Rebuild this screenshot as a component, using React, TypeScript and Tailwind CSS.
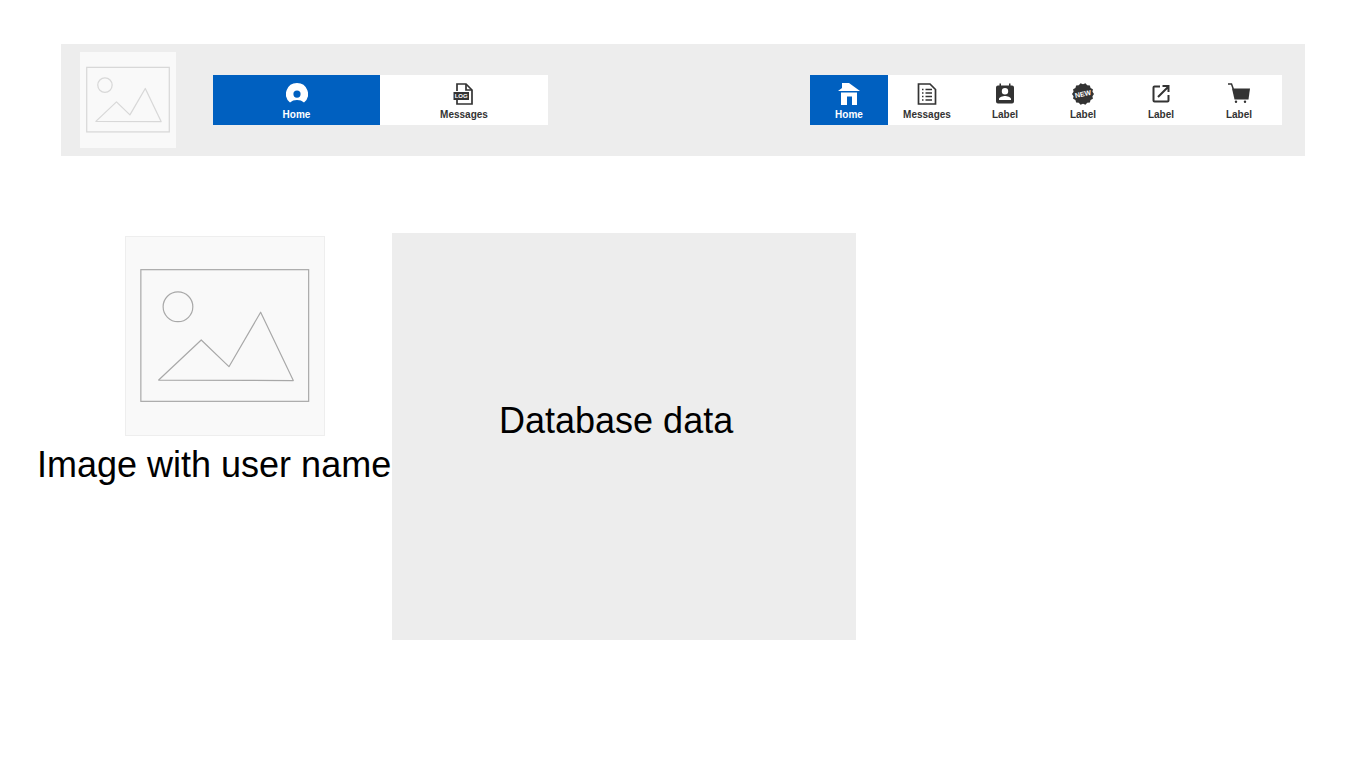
import React from 'react';

function Placeholder({ small }: { small?: boolean }) {
  const stroke = small ? '#d8d8d8' : '#a8a8a8';
  const width = small ? 2.600 : 1.200;
  return (
    <svg viewBox="0 0 200 200" className="w-full h-full" fill="none" stroke={stroke} strokeWidth={width}>
      <rect x={small ? 14 : 15} y={small ? 32 : 33} width={small ? 172 : 169.500} height={small ? 134.500 : 133} />
      <circle cx={small ? 52 : 52.500} cy={small ? 69 : 70.500} r={15} />
      <path d="M33 144.500 L76 104 L104 131 L136 76 L169 145 Z" strokeLinejoin="round" />
    </svg>
  );
}

function ProfileIcon() {
  return (
    <svg viewBox="0 0 22 22" className="w-[22px] h-[22px]">
      <path
        fill="#fff"
        fillRule="evenodd"
        d="M11 0a11 11 0 0 1 7 19.500C16 17.800 14 17 11 17s-5 .8-7 2.500A11 11 0 0 1 11 0Zm0 7.500a3.600 3.600 0 1 0 0 7.200 3.600 3.600 0 0 0 0-7.200Z"
      />
    </svg>
  );
}

function LogFileIcon() {
  return (
    <svg viewBox="0 0 22 22" className="w-[22px] h-[22px]">
      <path d="M4 8V1h9l6 6v14H4v-4" fill="none" stroke="#333" strokeWidth="1.700" />
      <path d="M13 1v6h6" fill="none" stroke="#333" strokeWidth="1.700" />
      <rect x="0.500" y="9" width="15.500" height="8" fill="#333" />
      <text x="8.200" y="15.200" textAnchor="middle" fontSize="6" fontWeight="700" fill="#fff" fontFamily="'Liberation Sans', sans-serif">
        LOG
      </text>
    </svg>
  );
}

function HouseIcon() {
  return (
    <svg viewBox="0 0 22 22" className="w-[22px] h-[22px]">
      <path fill="#fff" d="M4 0h7l11 8H0l4-3Z" />
      <path fill="#fff" fillRule="evenodd" d="M3 9.500h16V22H3Zm6 4v8.500h5v-8.500Z" />
    </svg>
  );
}

function ListDocIcon() {
  return (
    <svg viewBox="0 0 22 22" className="w-[22px] h-[22px]">
      <path d="M2.500 1h11.500l5.500 5.500V21H2.500Z" fill="none" stroke="#333" strokeWidth="1.700" />
      <path d="M6 6.500h1.500M6 10h1.500M6 13.500h1.500M6 17h1.500M9.500 6.500h6.500M9.500 10h6.500M9.500 13.500h6.500M9.500 17h6.500" stroke="#333" strokeWidth="1.400" />
    </svg>
  );
}

function ContactIcon() {
  return (
    <svg viewBox="0 0 22 22" className="w-[22px] h-[22px]">
      <path fill="#333" fillRule="evenodd" d="M5.500 .5h1.500v2h8v-2h1.500v2H18a2 2 0 0 1 2 2V18.500a2 2 0 0 1-2 2H4a2 2 0 0 1-2-2V4.500a2 2 0 0 1 2-2h1.500Zm5.500 4.500a3.200 3.200 0 1 0 0 6.400 3.200 3.200 0 0 0 0-6.400Zm-6 12h12v-1c0-2-4-3-6-3s-6 1-6 3Z" />
    </svg>
  );
}

function NewBadgeIcon() {
  const pts: string[] = [];
  for (let i = 0; i < 28; i++) {
    const r = i % 2 === 0 ? 11 : 9.700;
    const a = (i / 28) * Math.PI * 2;
    pts.push(`${(11 + r * Math.cos(a)).toFixed(2)},${(11 + r * Math.sin(a)).toFixed(2)}`);
  }
  return (
    <svg viewBox="0 0 22 22" className="w-[22px] h-[22px]">
      <polygon points={pts.join(' ')} fill="#333" />
      <text x="11" y="13.400" textAnchor="middle" fontSize="7" fontWeight="700" fill="#fff" fontFamily="'Liberation Sans', sans-serif" transform="rotate(-12 11 11)">
        NEW
      </text>
    </svg>
  );
}

function ExternalIcon() {
  return (
    <svg viewBox="0 0 22 22" className="w-[22px] h-[22px]" fill="none" stroke="#333" strokeWidth="2">
      <path d="M10 3.500H4.500a1 1 0 0 0-1 1v13a1 1 0 0 0 1 1h13a1 1 0 0 0 1-1V12" />
      <path d="M8 14L18.500 3.500M12.500 3H18.500V9" />
    </svg>
  );
}

function CartIcon() {
  return (
    <svg viewBox="0 0 22 22" className="w-[22px] h-[22px]">
      <path d="M0 1h3.500l1.800 5" fill="none" stroke="#333" strokeWidth="1.500" />
      <path fill="#333" d="M4 5.500H22l-1.500 11H6.500Z" />
      <circle cx="8" cy="18.800" r="1.200" fill="#333" />
      <circle cx="17" cy="18.800" r="1.200" fill="#333" />
    </svg>
  );
}

function NavItem({ icon, label, active, className }: { icon: React.ReactNode; label: string; active?: boolean; className: string }) {
  return (
    <div className={`${className} h-full flex flex-col items-center pt-2 ${active ? 'bg-[#0060c0] text-white' : 'bg-white text-[#333333]'}`}>
      {icon}
      <span className="text-[10px] leading-[12px] font-bold mt-1">{label}</span>
    </div>
  );
}

export default function App() {
  return (
    <div className="min-h-[760px] bg-white font-['Liberation_Sans',Arial,sans-serif] pt-11">
      <header className="ml-[61px] w-[1244px] h-[112px] bg-[#ededed] flex items-center pl-[19px] pr-[23px]">
        <div className="w-24 h-24 bg-[#f9f9f9] shrink-0">
          <Placeholder small />
        </div>
        <nav className="ml-[37px] flex h-[50px] w-[335px]">
          <NavItem className="w-[167px]" icon={<ProfileIcon />} label="Home" active />
          <NavItem className="w-[168px]" icon={<LogFileIcon />} label="Messages" />
        </nav>
        <nav className="ml-auto flex h-[50px] bg-white pr-1">
          <NavItem className="w-[78px]" icon={<HouseIcon />} label="Home" active />
          <NavItem className="w-[78px]" icon={<ListDocIcon />} label="Messages" />
          <NavItem className="w-[78px]" icon={<ContactIcon />} label="Label" />
          <NavItem className="w-[78px]" icon={<NewBadgeIcon />} label="Label" />
          <NavItem className="w-[78px]" icon={<ExternalIcon />} label="Label" />
          <NavItem className="w-[78px]" icon={<CartIcon />} label="Label" />
        </nav>
      </header>
      <main className="flex items-start ml-[37px] mt-[77px]">
        <div className="w-[355px] pt-[3px]">
          <div className="ml-[88px] w-[200px] h-[200px] bg-[#f9f9f9] border border-[#eeeeee]">
            <Placeholder />
          </div>
          <p className="text-[36px] leading-[41px] text-black mt-2 whitespace-nowrap">Image with user name</p>
        </div>
        <div className="w-[464px] h-[407px] bg-[#ededed] pl-[107px] pt-[167px]">
          <p className="text-[36px] leading-[41px] text-black">Database data</p>
        </div>
      </main>
    </div>
  );
}
